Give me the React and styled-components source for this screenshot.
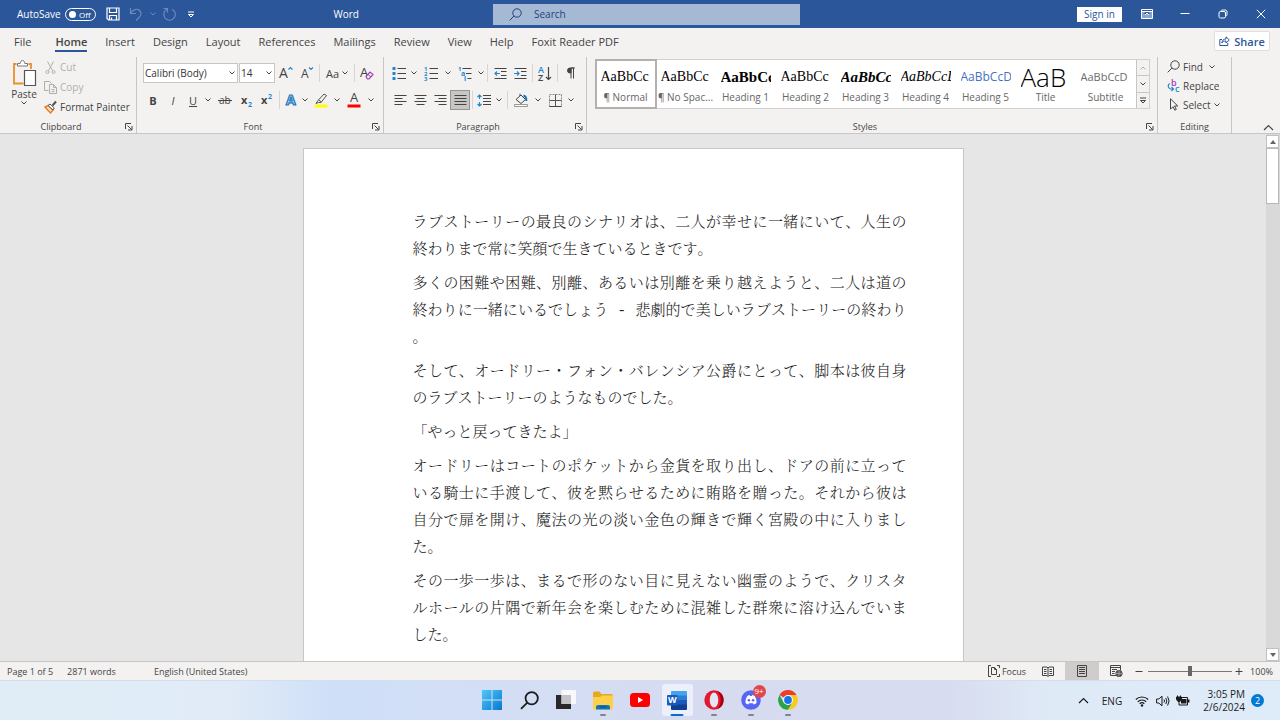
import { useState } from 'react';
import styled, { createGlobalStyle, css } from 'styled-components';

const GlobalStyle = createGlobalStyle`
	* {
		box-sizing: border-box;
	}

	body {
		margin: 0;
		font-family: "Open Sans", "Noto Sans", sans-serif;
		font-size: 11px;
		color: #444;
		overflow: hidden;
	}

	button, input, select {
		font: inherit;
		color: inherit;
		margin: 0;
	}
`;

const Window = styled.div`
	display: flex;
	flex-direction: column;
	width: 100%;
	height: 100vh;
	background: #e6e6e6;
`;

const PlainButton = styled.button`
	display: flex;
	align-items: center;
	justify-content: center;
	padding: 0;
	border: 0;
	background: none;
	white-space: nowrap;
`;

/* Title bar */

const TitleBar = styled.header`
	display: grid;
	grid-template-columns: 493fr 307fr 480fr;
	align-items: center;
	height: 28px;
	background: #2b579a;
	color: #fff;
	font-size: 10px;
`;

const QuickAccess = styled.div`
	display: flex;
	align-items: center;
	padding-left: 17px;
`;

const AutoSave = styled.label`
	display: flex;
	align-items: center;
	gap: 4px;
	margin-right: 7px;
`;

const Toggle = styled.button`
	display: flex;
	align-items: center;
	justify-content: space-between;
	width: 31px;
	height: 13px;
	padding: 0 4px 0 3px;
	border: 1px solid #fff;
	border-radius: 7px;
	background: none;
	font-size: 8px;
	line-height: 11px;

	&::before {
		content: "";
		width: 7px;
		height: 7px;
		border-radius: 50%;
		background: #fff;
	}
`;

const TitleButton = styled(PlainButton)`
	width: ${p => p.$w || 20}px;
	height: 28px;
	opacity: ${p => (p.disabled ? 0.3 : 1)};
`;

const DocTitle = styled.span`
	margin-left: auto;
	padding-right: 134px;
`;

const SearchBox = styled.label`
	display: flex;
	align-items: center;
	gap: 12px;
	height: 21px;
	padding-left: 16px;
	background: #a5b9d5;
	color: #1f427d;
`;

const SearchInput = styled.input`
	flex: 1;
	min-width: 0;
	padding: 0;
	border: 0;
	outline: 0;
	background: none;

	&::placeholder {
		color: #1f427d;
		opacity: 1;
	}
`;

const WindowControls = styled.div`
	display: flex;
	align-items: center;
	justify-content: flex-end;
`;

const SignIn = styled(PlainButton)`
	width: 45px;
	height: 15px;
	margin-right: 6px;
	background: #fff;
	color: #2b579a;
`;

/* Tabs */

const TabBar = styled.nav`
	display: flex;
	align-items: center;
	height: 28px;
	padding: 0 10px 0 5px;
	background: #f3f2f1;
`;

const Tab = styled(PlainButton)`
	position: relative;
	height: 28px;
	padding: 0 9px 2px;
	font-weight: ${p => (p.$active ? 600 : 400)};

	&:first-child {
		margin-right: 6px;
	}

	${p => p.$active && css`
		&::after {
			content: "";
			position: absolute;
			left: 9px;
			right: 9px;
			bottom: 4px;
			height: 2px;
			background: #2b579a;
		}
	`}
`;

const ShareButton = styled(PlainButton)`
	gap: 4px;
	width: 56px;
	height: 20px;
	margin: 0 0 2px auto;
	border: 1px solid #e1dfdd;
	border-radius: 2px;
	background: #fff;
	color: #2b579a;
	font-weight: 600;
`;

/* Ribbon */

const Ribbon = styled.section`
	display: flex;
	height: 78px;
	padding-top: 1px;
	border-bottom: 1px solid #c8c6c4;
	background: #f3f2f1;
`;

const GroupBox = styled.div`
	display: flex;
	flex-direction: column;
	flex: ${p => (p.$grow ? '1 1 0' : '0 0 auto')};
	width: ${p => (p.$w ? `${p.$w}px` : 'auto')};
	min-width: 0;
	border-right: 1px solid #c8c6c4;
`;

const GroupBody = styled.div`
	display: flex;
	flex: 1;
	min-height: 0;
	flex-direction: ${p => (p.$column ? 'column' : 'row')};
	gap: ${p => p.$gap || 0}px;
	padding: ${p => p.$pad || '6px 6px 0'};
`;

const GroupFooter = styled.div`
	display: flex;
	align-items: center;
	height: 13px;
	font-size: 9px;
	text-align: center;
`;

const GroupLabel = styled.span`
	flex: 1;
`;

const Launcher = styled(PlainButton)`
	width: 14px;
	height: 13px;
`;

const ToolRow = styled.div`
	display: flex;
	align-items: center;
	height: 20px;
`;

const Tool = styled(PlainButton)`
	width: ${p => p.$w || 20}px;
	height: 20px;
	font-size: 11px;

	${p => p.$active && css`
		border: 1px solid #979593;
		background: #c8c6c4;
	`}
`;

const Divider = styled.span`
	width: 1px;
	height: 18px;
	margin: 0 2px;
	background: #d8d6d4;
`;

const Combo = styled.span`
	display: flex;
	align-items: center;
	width: ${p => p.$w}px;
	height: 20px;
	margin-right: ${p => p.$after || 0}px;
	padding-right: 2px;
	border: 1px solid #c8c6c4;
	background: #fff;
`;

const ComboSelect = styled.select`
	flex: 1;
	min-width: 0;
	height: 18px;
	padding: 0 0 0 1px;
	border: 0;
	outline: 0;
	appearance: none;
	background: none;
	color: #333;
	font-size: 10px;
`;

const PasteButton = styled(PlainButton)`
	flex-direction: column;
	justify-content: flex-start;
	width: 36px;
	padding: 2px 0 0;
	font-size: 10px;
`;

const LabelledList = styled.div`
	display: flex;
	flex-direction: column;
`;

const LabelledTool = styled(PlainButton)`
	justify-content: flex-start;
	gap: 3px;
	height: ${p => p.$h || 20}px;
	font-size: 10px;
	color: ${p => (p.disabled ? '#b1afad' : '#444')};
`;

const Gallery = styled.div`
	display: flex;
	height: 50px;
	margin: 0 auto;
	border: 1px solid #d2d0ce;
	background: #fff;
`;

const StyleItem = styled(PlainButton)`
	flex-direction: column;
	width: 60px;
	height: 48px;
	padding-top: 2px;
	outline: ${p => (p.$active ? '2px solid #b3b0ad' : '0')};
	outline-offset: -1px;
`;

const StylePreview = styled.span`
	width: 50px;
	height: 24px;
	overflow: hidden;
	text-align: left;
	line-height: 24px;
	color: ${p => p.$color || '#000'};
	font-family: ${p => (p.$sans ? '"Open Sans", sans-serif' : '"Liberation Serif", serif')};
	font-size: ${p => p.$size || 14}px;
	font-weight: ${p => p.$weight || 400};
	font-style: ${p => (p.$italic ? 'italic' : 'normal')};
`;

const StyleName = styled.span`
	height: 16px;
	line-height: 16px;
	font-size: 10px;
	color: #666;
`;

const GalleryNav = styled.div`
	display: flex;
	flex-direction: column;
	width: 13px;
`;

const GalleryNavButton = styled(PlainButton)`
	flex: 1;
	border-left: 1px solid #c8c6c4;
	background: #f3f2f1;

	& + & {
		border-top: 1px solid #c8c6c4;
	}
`;

const RibbonEnd = styled.div`
	display: flex;
	align-items: flex-end;
	justify-content: flex-end;
	width: 48px;
	padding: 0 6px 2px 0;
`;

/* Document */

const Workspace = styled.main`
	display: flex;
	flex: 1;
	min-height: 0;
`;

const Canvas = styled.div`
	display: flex;
	justify-content: center;
	flex: 1;
	min-width: 0;
	overflow: hidden;
	padding-top: 14px;
`;

const Page = styled.article`
	width: 661px;
	min-height: 855px;
	padding: 61px 0 0 109px;
	border: 1px solid #c6c6c6;
	background: #fff;
	color: #222;
	font-family: "Liberation Mono", "Noto Serif CJK JP", "Noto Sans CJK JP", monospace;
	font-size: 15px;
	font-weight: 300;
	line-height: 27px;
	font-kerning: none;
	text-spacing-trim: space-all;
`;

const Paragraph = styled.p`
	width: 494px;
	margin: 0 0 7px;
	text-align: justify;
	line-break: anywhere;
`;

const ScrollBar = styled.div`
	display: flex;
	flex-direction: column;
	width: 14px;
	padding: 1px 1px 0 0;
	background: #d9d9d9;
`;

const ScrollButton = styled(PlainButton)`
	height: 13px;
	border: 1px solid #c1c1c1;
	background: #fff;
`;

const ScrollThumb = styled.div`
	height: 56px;
	margin-bottom: auto;
	border: 1px solid #b8b8b8;
	background: #fff;
`;

/* Status bar */

const StatusBar = styled.footer`
	display: flex;
	align-items: center;
	height: 19px;
	padding: 0 7px;
	border-top: 1px solid #c8c6c4;
	background: #f3f2f1;
	font-size: 9px;
`;

const StatusText = styled.span`
	margin-right: ${p => p.$after || 0}px;
	white-space: nowrap;
`;

const StatusTools = styled.div`
	display: flex;
	align-items: center;
	margin-left: auto;
`;

const ViewButton = styled(PlainButton)`
	gap: 2px;
	width: ${p => p.$w || 34}px;
	height: 18px;
	background: ${p => (p.$active ? '#cfcdcb' : 'none')};
`;

const ZoomSlider = styled.input`
	width: 84px;
	height: 12px;
	margin: 0 3px;
	appearance: none;
	background: linear-gradient(#777, #777) center / 100% 1px no-repeat;

	&::-webkit-slider-thumb {
		appearance: none;
		width: 4px;
		height: 10px;
		background: #666;
	}
`;

const ZoomValue = styled.span`
	width: 30px;
	text-align: right;
`;

/* Taskbar */

const Taskbar = styled.footer`
	display: grid;
	grid-template-columns: 1fr auto 1fr;
	align-items: center;
	height: 40px;
	border-top: 1px solid #d3dfea;
	background: linear-gradient(90deg, #e0edf6 0%, #e0ebf7 18%, #cfdff8 26%, #d3def5 40%, #d6dbf0 55%, #d8dcf0 74%, #dfeaf7 82%, #deebf8 100%);
	color: #1b1b1b;
`;

const TaskApps = styled.div`
	display: flex;
	grid-column: 2;
`;

const TaskApp = styled(PlainButton)`
	position: relative;
	width: ${p => (p.$active ? 31 : 37)}px;
	height: 32px;
	margin: 0 ${p => (p.$active ? 3 : 0)}px 1px;
	border-radius: 3px;
	background: ${p => (p.$active ? '#edf0fa' : 'none')};

	${p => p.$running && css`
		&::after {
			content: "";
			position: absolute;
			left: 50%;
			bottom: 0;
			width: ${p.$active ? 13 : 6}px;
			height: 2px;
			border-radius: 1px;
			background: ${p.$active ? '#0a6fc9' : '#80858f'};
			transform: translateX(-50%);
		}
	`}
`;

const CountBadge = styled.span`
	position: absolute;
	top: 1px;
	right: 4px;
	width: 13px;
	height: 13px;
	border-radius: 50%;
	background: #e0474c;
	color: #fff;
	font-size: 8px;
	line-height: 12px;
`;

const Tray = styled.div`
	display: flex;
	align-items: center;
	justify-content: flex-end;
	padding-right: 16px;
`;

const TrayButton = styled(PlainButton)`
	width: ${p => p.$w || 20}px;
	height: 32px;
	font-size: 10px;
`;

const Clock = styled.time`
	width: 52px;
	font-size: 10px;
	line-height: 13px;
	text-align: right;
	white-space: nowrap;
`;

const Notifications = styled(PlainButton)`
	width: 13px;
	height: 13px;
	margin-left: 6px;
	border-radius: 50%;
	background: #0078d4;
	color: #fff;
	font-size: 9px;
`;

/* Icons */

const BLUE = '#1e88d0';

const Svg = ({ w = 16, h = w, children, ...rest }) => (
	<svg width={w} height={h} viewBox={`0 0 ${w} ${h}`} fill="none" stroke="currentColor" strokeWidth="1" overflow="visible" aria-hidden="true" {...rest}>
		{children}
	</svg>
);

const Glyph = ({ color = 'currentColor', size, children, ...rest }) => (
	<text fill={color} stroke="none" fontSize={size} {...rest}>{children}</text>
);

const Chevron = ({ up, big, color }) => {
	if (big) {
		return <Svg w={11} h={7} strokeWidth="1.2"><path d={up ? 'M1 6 5.500 1.500 10 6' : 'M1 1 5.500 5.500 10 1'} /></Svg>;
	}
	return <Svg w={6} h={4} stroke={color || 'currentColor'}><path d={up ? 'M.5 3.500 3 1 5.500 3.500' : 'M.5.5 3 3 5.500.5'} /></Svg>;
};

const SaveIcon = () => (
	<Svg w={14} strokeWidth="1.2">
		<path d="M1 1h12v12H2.500L1 11.500zM3.500 1v4.500h7V1M3.500 13V8.500h7V13M5.500 13v-2.500" />
	</Svg>
);

const UndoIcon = () => (
	<Svg w={14} strokeWidth="1.2"><path d="M1.500 1v5.500H7M1.500 6.500C4 2.500 8 1 10.500 3.500s2 5-1 7.500L7 13.500" /></Svg>
);

const RedoIcon = () => (
	<Svg w={14} strokeWidth="1.2"><path d="M1.500 1.500h4v4M5.500 2A5.800 5.800 0 1 0 10 2.200" /></Svg>
);

const CustomizeIcon = () => <Svg w={8} h={7}><path d="M1 1h6M1.500 3.500h5L4 6z" /></Svg>;

const MagnifierIcon = ({ size = 13, weight = 1 }) => (
	<svg width={size} height={size} viewBox="0 0 13 13" fill="none" stroke="currentColor" strokeWidth={weight} aria-hidden="true">
		<circle cx="8" cy="5" r="4.200" /><path d="M5 8 .7 12.300" />
	</svg>
);

const RibbonModeIcon = () => (
	<Svg w={12} h={10}>
		<path d="M.5.5h11v9H.5zM.5 2.500h11" />
		<path fill="#fff" stroke="none" d="M1 2h4L3 5h2v4H1zM7 2h4v7H7V5h2z" opacity=".45" />
		<path d="M6 9V4M4 6l2-2 2 2" />
	</Svg>
);

const MinimizeIcon = () => <Svg w={10}><path d="M.5 4.500h9" /></Svg>;
const RestoreIcon = () => <Svg w={10}><rect x="1" y="2.500" width="6.500" height="6.500" rx="1.500" /><path d="M3 2.500C3 1.500 3.500 1 4.500 1H7c1.500 0 2 .5 2 2v2.500C9 6.500 8.500 7 7.500 7" /></Svg>;
const CloseIcon = () => <Svg w={10}><path d="m.8.8 8.400 8.400m0-8.400L.8 9.200" /></Svg>;
const ShareIcon = () => <Svg w={11} h={10}><path d="M3 3.500H.8v6h8V7M2.800 7C3 4.500 4.500 3 7 3V.8L10.300 4 7 7V5C5 5 3.800 5.500 2.800 7z" /></Svg>;

const PasteIcon = () => (
	<Svg w={26} h={28}>
		<path d="M5.500 5H3v19.500h9.500M17.500 5H20v5" stroke="#e8912d" strokeWidth="1.800" />
		<path d="M6.500 7V4.500h2.700C9.500 2.500 10.300 1.500 11.500 1.500s2 1 2.300 3h2.700V7z" fill="#fff" stroke="#777" />
		<path d="M13.500 11.500h11v15h-11z" fill="#fff" stroke="#555" strokeWidth="1.200" />
	</Svg>
);

const CutIcon = () => <Svg w={13} h={13}><path d="m3.500.5 5 9M9.500.5l-5 9" /><circle cx="3.500" cy="11" r="1.500" /><circle cx="9.500" cy="11" r="1.500" /></Svg>;
const CopyIcon = () => <Svg w={13} h={13}><path d="M4.500 9.500h-4v-9h5l2 2M5.500 3.500h4l3 3v6h-7zM9.500 3.500v3h3M7.500 8.500h3m-3 2h3" /></Svg>;
const PainterIcon = () => (
	<Svg w={13} h={13}>
		<path d="M1 6 6.500 12l2.500-3L4 4.500z" fill="#fbe0c3" stroke="#e8791f" strokeWidth="1.400" />
		<path d="m4 4.500 2-1.500L10.200 7 9 9z" fill="#fff" stroke="#555" />
		<path d="m8.500 4.500 3.500-4" stroke="#555" strokeWidth="2" />
	</Svg>
);

const LauncherIcon = () => <Svg w={8}><path d="M.5 6V.5H6M2.500 2.500 6.500 6.500M7 3v4H3" /></Svg>;

const GrowFontIcon = ({ shrink }) => (
	<Svg w={14} h={14}>
		<Glyph x={shrink ? 1 : 0} y="12" size={shrink ? 12 : 14}>A</Glyph>
		<path d={shrink ? 'm9 1.500 2 2 2-2' : 'm9.500 3.500 2-2 2 2'} stroke={BLUE} strokeWidth="1.200" />
	</Svg>
);

const ClearFormatIcon = () => (
	<Svg w={14} h={14}>
		<Glyph x="0" y="11" size="13">A</Glyph>
		<path d="m6 10.500 4-4.500 3 2.500-4 4.500H7.500z" fill="#f3f2f1" stroke="#a33fb5" strokeWidth="1.200" /><path d="m8 8.500 3 2.500" stroke="#a33fb5" />
	</Svg>
);

const StrikeIcon = () => (
	<Svg w={14} h={14}><Glyph x="1" y="11" size="10">ab</Glyph><path d="M0 7.500h14" /></Svg>
);

const ScriptIcon = ({ sup }) => (
	<Svg w={14} h={16}>
		<Glyph x="1" y="12" size="11" fontWeight="700">x</Glyph>
		<Glyph x="8" y={sup ? 7 : 15} color={BLUE} size="7" fontWeight="700">2</Glyph>
	</Svg>
);

const TextEffectIcon = () => (
	<Svg w={14} h={14}>
		<text x="2" y="12" fontSize="14" fontWeight="700" fill="#bfe0f7" stroke="#1b75bb" strokeWidth="1.200">A</text>
	</Svg>
);

const HighlightIcon = () => (
	<Svg w={14} h={16}>
		<path d="M4 8.500 10 2l2.500 1.500-5.500 7H4.500L2 11.500z" stroke="#555" /><path d="m4.500 8 3 2" stroke="#555" />
		<path d="M.5 12.500h13v3H.5z" fill="#ff0" stroke="none" />
	</Svg>
);

const FontColorIcon = () => (
	<Svg w={14} h={16}><Glyph x="3" y="10" size="13">A</Glyph><path d="M.5 12.500h13v3H.5z" fill="#f00" stroke="none" /></Svg>
);

const LIST_LINES = 'M5.500 2.500H14M5.500 7.500H14M5.500 12.500H14';
const BulletsIcon = () => <Svg w={14} h={15}><path d={LIST_LINES} /><path d="M.5 1h3v3h-3zM.5 6h3v3h-3zM.5 11h3v3h-3z" fill={BLUE} stroke="none" /></Svg>;
const NumberingIcon = () => (
	<Svg w={14} h={15}>
		<path d={LIST_LINES} />
		{[1, 2, 3].map(n => <Glyph key={n} x="0" y={n * 5} size="6" fontWeight="700" color={BLUE}>{n}</Glyph>)}
	</Svg>
);
const MultilevelIcon = () => (
	<Svg w={14} h={15}>
		<path d="M4.500 2.500h9M8 7.500h5.500M9.500 12.500h4" />
		<Glyph x="0" y="5" size="6" fontWeight="700" color={BLUE}>1</Glyph>
		<Glyph x="3" y="10" size="7" fontWeight="700" color={BLUE}>a</Glyph>
		<Glyph x="6" y="15" size="7" fontWeight="700" color={BLUE}>i</Glyph>
	</Svg>
);
const IndentIcon = ({ out }) => (
	<Svg w={13} h={13}>
		<path d="M.5 1.500h12M7 4.500h5.500M7 8.500h5.500M.5 11.500h12" />
		<path d={out ? 'M6 6.500H1M3 4.500l-2 2 2 2' : 'M0 6.500h5M3 4.500l2 2-2 2'} stroke={BLUE} strokeWidth="1.200" />
	</Svg>
);
const SortIcon = () => (
	<Svg w={14} h={15}>
		<Glyph x="0" y="7" size="9" fontWeight="600" color={BLUE}>A</Glyph>
		<Glyph x="0" y="15" size="9" fontWeight="600">Z</Glyph>
		<path d="M10.500 1v12.500M8 11l2.500 2.500L13 11" strokeWidth="1.200" />
	</Svg>
);
const PilcrowIcon = () => <Svg w={9} h={12}><path d="M8.500 1H4a2.500 2.500 0 0 0 0 5h1V1z" fill="currentColor" /><path d="M5 1v10.500M7.500 1v10.500" /></Svg>;

const ALIGN_PATHS = {
	left: 'M.5 1.500h12M.5 4.500h8M.5 7.500h12M.5 10.500h8',
	center: 'M.5 1.500h12M2.500 4.500h8M.5 7.500h12M2.500 10.500h8',
	right: 'M.5 1.500h12M4.500 4.500h8M.5 7.500h12M4.500 10.500h8',
	justify: 'M.5 1.500h12M.5 4.500h12M.5 7.500h12M.5 10.500h12',
};
const AlignIcon = ({ kind }) => <Svg w={13} h={12}><path d={ALIGN_PATHS[kind]} /></Svg>;

const SpacingIcon = () => (
	<Svg w={14} h={13}>
		<path d="M6 1.500h8M6 4.500h8M6 7.500h8M6 10.500h8" />
		<path d="M2.500 1v4M.5 3l2-2 2 2M2.500 8v4M.5 10l2 2 2-2" stroke={BLUE} strokeWidth="1.200" />
	</Svg>
);
const ShadingIcon = () => (
	<Svg w={14} h={14}>
		<path d="M2 6.500 7 2l4.500 4.500L7 10.500zM6 3V.8" /><path d="M9.500 2.500c2.500.5 3 2.500 2.800 5.500" stroke="#1b75bb" strokeWidth="2" />
		<path d="M.5 11.500h13v2H.5z" fill="#fff" stroke="#999" />
	</Svg>
);
const BordersIcon = () => <Svg w={13} h={13}><path d="M.5.5h12v12H.5z" stroke="#888" strokeDasharray="2 1" /><path d="M6.500.5v12M.5 6.500h12" stroke="#555" /><path d="M.5 12.500h12" /></Svg>;

const ReplaceIcon = () => (
	<Svg w={13} h={14}>
		<Glyph x="4" y="7" color="#a33fb5" size="9" fontWeight="600">b</Glyph>
		<Glyph x="8" y="13" color={BLUE} size="9" fontWeight="600">c</Glyph>
		<path d="M3 4.500c-2.500 1-2.500 4.500.5 5.500h3M4.500 8l2 2-2 2" stroke={BLUE} strokeWidth="1.200" />
	</Svg>
);
const SelectIcon = () => <Svg w={13} h={13}><path d="M3.500.8v10.400l2.500-2.500 1.800 3.500 1.500-.8L7.600 8h3.200z" /></Svg>;

const TriangleIcon = ({ up }) => <Svg w={6} h={4}><path d={up ? 'M0 4 3 0l3 4z' : 'M0 0h6L3 4z'} fill="#666" stroke="none" /></Svg>;

const FocusIcon = () => <Svg w={12} h={12}><path d="M3 .5H.5v11H3M9 .5h2.500V3M9 11.500h2.500V9M3.500 2.500h3l2 2v5h-5zM6.500 2.500v2h2" /></Svg>;
const ReadIcon = () => <Svg w={12} h={11}><path d="M.5 1h4.500l1 1 1-1h4.500v8.500H7l-1 1-1-1H.5zM6 2v8.500M2 3.500h2.500M2 5.500h2.500M2 7.500h2.500M7.500 3.500H10M7.500 5.500H10M7.500 7.500H10" /></Svg>;
const PrintIcon = () => <Svg w={10} h={12}><path d="M.5.5h9v11h-9zM2 2.500h6M2 4.500h6M2 6.500h6M2 8.500h6" /></Svg>;
const WebIcon = () => (
	<Svg w={13} h={12}>
		<path d="M6 10.500H.5V.5h10V5M.5 2.500h10M2 4.500h5M2 6.500h3M2 8.500h2.500" />
		<circle cx="9" cy="8.500" r="3.200" fill="#555" stroke="#555" /><path d="M6 8.500h6M9 5.500v6" stroke="#ccc" strokeWidth=".6" />
	</Svg>
);

const WindowsIcon = () => (
	<Svg w={20} stroke="none">
		<defs><linearGradient id="win" x1="0" y1="0" x2="1" y2="1"><stop stopColor="#4fc8f4" /><stop offset="1" stopColor="#0878d2" /></linearGradient></defs>
		<path d="M0 0h9.500v9.500H0zM10.500 0H20v9.500h-9.500zM0 10.500h9.500V20H0zM10.500 10.500H20V20h-9.500z" fill="url(#win)" />
	</Svg>
);
const TaskViewIcon = () => (
	<Svg w={20} stroke="none">
		<path d="M0 5h15v14H0z" fill="#282828" /><path d="M5.500 0H20v14H5.500z" fill="#fafafa" opacity=".92" /><path d="M5.500 5H15v9H5.500z" fill="#c4c4c6" />
	</Svg>
);
const ExplorerIcon = () => (
	<Svg w={20} h={19} stroke="none">
		<path d="M0 2Q0 .5 1.500.5h5l2 2.500H18q2 0 2 2v5H0z" fill="#e6a821" />
		<path d="M0 6h7l2-1.500h11V17q0 1.500-1.500 1.500h-17Q0 18.500 0 17z" fill="#fdd04b" />
		<path d="M3 18.500V16q0-2 2-2h10q2 0 2 2v2.500z" fill="#0f75bd" /><path d="M6.500 16h7" stroke="#064f88" />
	</Svg>
);
const YoutubeIcon = () => <Svg w={20} h={14} stroke="none"><rect width="20" height="14" rx="3.500" fill="#f00" /><path d="m8 4 5.200 3L8 10z" fill="#fff" /></Svg>;
const WordIcon = () => (
	<Svg w={20} h={20} stroke="none">
		<path d="M5 1h14q1 0 1 1v4H4V2q0-1 1-1z" fill="#41a5ee" /><path d="M4 5.500h16V10H4z" fill="#2b7cd3" />
		<path d="M4 10h16v5H4z" fill="#185abd" /><path d="M4 14.500h16V19q0 1-1 1H5q-1 0-1-1z" fill="#103f91" />
		<rect y="5" width="10.500" height="10.500" rx="1" fill="#185abd" />
		<Glyph x="1" y="13" color="#fff" size="9" fontWeight="700">W</Glyph>
	</Svg>
);
const OperaIcon = () => (
	<Svg w={20} h={20} stroke="none">
		<circle cx="10" cy="10" r="9.700" fill="#e3192d" /><path d="M13 .8A9.700 9.700 0 0 1 13 19.200c5-5 5-13 0-18.400z" fill="#a70014" />
		<ellipse cx="10" cy="10" rx="4.300" ry="7.600" fill="#e4e6f5" />
	</Svg>
);
const DiscordIcon = () => (
	<Svg w={20} h={20} stroke="none">
		<circle cx="10" cy="10" r="9.800" fill="#5865f2" />
		<path d="M6.500 5.800 8.600 5l.5 1h1.800l.5-1 2.100.8c1.500 2.200 2.200 4.600 2 7.200-.9.800-1.900 1.200-2.700 1.500l-.8-1.300h-4l-.8 1.300c-.9-.3-1.800-.7-2.700-1.500-.2-2.600.5-5 2-7.200z" fill="#fff" />
		<circle cx="7.900" cy="10.300" r="1.300" fill="#5865f2" /><circle cx="12.100" cy="10.300" r="1.300" fill="#5865f2" />
	</Svg>
);
const ChromeIcon = () => (
	<Svg w={20} h={20} stroke="none">
		<path d="M10 10 1.500 5A9.800 9.800 0 0 1 18.500 5H10z" fill="#e8402f" />
		<path d="M10 5h8.500A9.800 9.800 0 0 1 10 19.800L14.300 12.500z" fill="#fcc91f" />
		<path d="M1.500 5 5.700 12.500 10 15l4.300-2.500L10 19.800A9.800 9.800 0 0 1 1.500 5z" fill="#2ba24c" />
		<circle cx="10" cy="10" r="4.900" fill="#fff" /><circle cx="10" cy="10" r="3.900" fill="#1a73e8" />
	</Svg>
);

const WifiIcon = () => <Svg w={14} h={12}><path d="M.8 4.500a9 9 0 0 1 12.400 0M2.800 6.700a6 6 0 0 1 8.400 0M4.700 8.800a3.300 3.300 0 0 1 4.600 0" strokeWidth="1.200" /><circle cx="7" cy="10.500" r="1.200" fill="currentColor" stroke="none" /></Svg>;
const VolumeIcon = () => <Svg w={14} h={12}><path d="M.6 4h2.200L6 1.200v9.600L2.800 8H.6zM8 4.500q1 1.500 0 3M9.800 3q2 3 0 6M11.600 1.500q3 4.500 0 9" /></Svg>;
const BatteryIcon = () => (
	<Svg w={14} h={12}>
		<path d="M4 2.500h7.500v7.500H3V7" /><path d="M12 4.500h1.500v3H12z" fill="currentColor" stroke="none" /><path d="M5 4h5.500v4.500H5z" fill="currentColor" stroke="none" />
		<path d="M.5 2h5v2.500L4 6.500H2L.5 4.500zM1.500.5V2M4.500.5V2" fill="currentColor" />
	</Svg>
);

/* Content */

const TABS = ['File', 'Home', 'Insert', 'Design', 'Layout', 'References', 'Mailings', 'Review', 'View', 'Help', 'Foxit Reader PDF'];

const STYLES = [
	{ name: '¶ Normal', text: 'AaBbCc' },
	{ name: '¶ No Spac...', text: 'AaBbCc' },
	{ name: 'Heading 1', text: 'AaBbCc', size: 15, weight: 700 },
	{ name: 'Heading 2', text: 'AaBbCc' },
	{ name: 'Heading 3', text: 'AaBbCc', size: 15, weight: 700, italic: true },
	{ name: 'Heading 4', text: 'AaBbCcD', italic: true },
	{ name: 'Heading 5', text: 'AaBbCcD', sans: true, size: 12, color: '#4472c4' },
	{ name: 'Title', text: 'AaB', sans: true, size: 26, weight: 300 },
	{ name: 'Subtitle', text: 'AaBbCcD', sans: true, size: 11, color: '#6b6b6b' },
];

const PARAGRAPHS = [
	'ラブストーリーの最良のシナリオは、二人が幸せに一緒にいて、人生の終わりまで常に笑顔で生きているときです。',
	'多くの困難や困難、別離、あるいは別離を乗り越えようと、二人は道の終わりに一緒にいるでしょう - 悲劇的で美しいラブストーリーの終わり。',
	'そして、オードリー・フォン・バレンシア公爵にとって、脚本は彼自身のラブストーリーのようなものでした。',
	'「やっと戻ってきたよ」',
	'オードリーはコートのポケットから金貨を取り出し、ドアの前に立っている騎士に手渡して、彼を黙らせるために賄賂を贈った。それから彼は自分で扉を開け、魔法の光の淡い金色の輝きで輝く宮殿の中に入りました。',
	'その一歩一歩は、まるで形のない目に見えない幽霊のようで、クリスタルホールの片隅で新年会を楽しむために混雑した群衆に溶け込んでいました。',
];

const Group = ({ label, launcher = true, width, grow, children }) => (
	<GroupBox $w={width} $grow={grow}>
		{children}
		<GroupFooter>
			<GroupLabel>{label}</GroupLabel>
			{launcher && <Launcher aria-label={`${label} settings`}><LauncherIcon /></Launcher>}
		</GroupFooter>
	</GroupBox>
);

const Drop = ({ w = 12, label }) => <Tool $w={w} aria-label={label}><Chevron /></Tool>;

const App = () => {
	const [activeTab, setActiveTab] = useState('Home');
	const [activeStyle, setActiveStyle] = useState('¶ Normal');
	const [align, setAlign] = useState('justify');
	const [zoom, setZoom] = useState(100);

	return (
		<Window>
			<GlobalStyle />
			<TitleBar>
				<QuickAccess>
					<AutoSave>AutoSave<Toggle role="switch" aria-checked="false">Off</Toggle></AutoSave>
					<TitleButton aria-label="Save"><SaveIcon /></TitleButton>
					<TitleButton $w={26} disabled aria-label="Undo"><UndoIcon /></TitleButton>
					<TitleButton $w={8} disabled aria-label="Undo history"><Chevron /></TitleButton>
					<TitleButton $w={24} disabled aria-label="Redo"><RedoIcon /></TitleButton>
					<TitleButton aria-label="Customize toolbar"><CustomizeIcon /></TitleButton>
					<DocTitle>Word</DocTitle>
				</QuickAccess>
				<SearchBox>
					<MagnifierIcon />
					<SearchInput placeholder="Search" aria-label="Search" />
				</SearchBox>
				<WindowControls>
					<SignIn>Sign in</SignIn>
					<TitleButton $w={38} aria-label="Ribbon display options"><RibbonModeIcon /></TitleButton>
					<TitleButton $w={38} aria-label="Minimize"><MinimizeIcon /></TitleButton>
					<TitleButton $w={38} aria-label="Restore"><RestoreIcon /></TitleButton>
					<TitleButton $w={38} aria-label="Close"><CloseIcon /></TitleButton>
				</WindowControls>
			</TitleBar>

			<TabBar>
				{TABS.map(tab => (
					<Tab key={tab} $active={tab === activeTab} onClick={() => setActiveTab(tab)}>{tab}</Tab>
				))}
				<ShareButton><ShareIcon />Share</ShareButton>
			</TabBar>

			<Ribbon>
				<Group label="Clipboard" width={137}>
					<GroupBody $pad="0 6px" $gap={2}>
						<PasteButton><PasteIcon />Paste<Chevron /></PasteButton>
						<LabelledList>
							<LabelledTool disabled><CutIcon />Cut</LabelledTool>
							<LabelledTool disabled><CopyIcon />Copy</LabelledTool>
							<LabelledTool><PainterIcon />Format Painter</LabelledTool>
						</LabelledList>
					</GroupBody>
				</Group>

				<Group label="Font" width={247}>
					<GroupBody $column $gap={7}>
						<ToolRow>
							<Combo $w={95} $after={1}>
								<ComboSelect aria-label="Font"><option>Calibri (Body)</option></ComboSelect><Chevron />
							</Combo>
							<Combo $w={36}>
								<ComboSelect aria-label="Font size"><option>14</option></ComboSelect><Chevron />
							</Combo>
							<Tool $w={22} aria-label="Grow font"><GrowFontIcon /></Tool>
							<Tool aria-label="Shrink font"><GrowFontIcon shrink /></Tool>
							<Divider />
							<Tool $w={30} aria-label="Change case">Aa&nbsp;<Chevron /></Tool>
							<Divider />
							<Tool aria-label="Clear formatting"><ClearFormatIcon /></Tool>
						</ToolRow>
						<ToolRow>
							<Tool><b>B</b></Tool>
							<Tool><i>I</i></Tool>
							<Tool><u>U</u></Tool>
							<Drop w={10} label="Underline style" />
							<Tool $w={24} aria-label="Strikethrough"><StrikeIcon /></Tool>
							<Tool aria-label="Subscript"><ScriptIcon /></Tool>
							<Tool aria-label="Superscript"><ScriptIcon sup /></Tool>
							<Divider />
							<Tool $w={18} aria-label="Text effects"><TextEffectIcon /></Tool>
							<Drop w={10} label="Text effect options" />
							<Tool $w={22} aria-label="Highlight"><HighlightIcon /></Tool>
							<Drop w={10} label="Highlight color" />
							<Tool $w={24} aria-label="Font color"><FontColorIcon /></Tool>
							<Drop w={10} label="Font color options" />
						</ToolRow>
					</GroupBody>
				</Group>

				<Group label="Paragraph" width={203}>
					<GroupBody $column $gap={7}>
						<ToolRow>
							<Tool $w={18} aria-label="Bullets"><BulletsIcon /></Tool>
							<Drop label="Bullet library" />
							<Tool $w={22} aria-label="Numbering"><NumberingIcon /></Tool>
							<Drop label="Numbering library" />
							<Tool $w={22} aria-label="Multilevel list"><MultilevelIcon /></Tool>
							<Drop w={10} label="List library" />
							<Divider />
							<Tool aria-label="Decrease indent"><IndentIcon out /></Tool>
							<Tool aria-label="Increase indent"><IndentIcon /></Tool>
							<Divider />
							<Tool aria-label="Sort"><SortIcon /></Tool>
							<Divider />
							<Tool aria-label="Show marks"><PilcrowIcon /></Tool>
						</ToolRow>
						<ToolRow>
							{Object.keys(ALIGN_PATHS).map(kind => (
								<Tool key={kind} $active={kind === align} onClick={() => setAlign(kind)} aria-label={`Align ${kind}`}>
									<AlignIcon kind={kind} />
								</Tool>
							))}
							<Divider />
							<Tool $w={18} aria-label="Line spacing"><SpacingIcon /></Tool>
							<Drop label="Line spacing options" />
							<Divider />
							<Tool $w={22} aria-label="Shading"><ShadingIcon /></Tool>
							<Drop label="Shading color" />
							<Tool $w={22} aria-label="Borders"><BordersIcon /></Tool>
							<Drop w={10} label="Border options" />
						</ToolRow>
					</GroupBody>
				</Group>

				<Group label="Styles" grow>
					<GroupBody $pad="2px 0 0">
						<Gallery>
							{STYLES.map(s => (
								<StyleItem key={s.name} $active={s.name === activeStyle} onClick={() => setActiveStyle(s.name)}>
									<StylePreview $sans={s.sans} $size={s.size} $weight={s.weight} $italic={s.italic} $color={s.color}>{s.text}</StylePreview>
									<StyleName>{s.name}</StyleName>
								</StyleItem>
							))}
							<GalleryNav>
								<GalleryNavButton aria-label="Previous styles"><Chevron up color="#b1afad" /></GalleryNavButton>
								<GalleryNavButton aria-label="Next styles"><Chevron /></GalleryNavButton>
								<GalleryNavButton aria-label="More styles"><CustomizeIcon /></GalleryNavButton>
							</GalleryNav>
						</Gallery>
					</GroupBody>
				</Group>

				<Group label="Editing" launcher={false} width={74}>
					<GroupBody $pad="0 0 0 9px">
						<LabelledList>
							<LabelledTool $h={19}><MagnifierIcon />Find&nbsp; <Chevron /></LabelledTool>
							<LabelledTool $h={19}><ReplaceIcon />Replace</LabelledTool>
							<LabelledTool $h={19}><SelectIcon />Select<Chevron /></LabelledTool>
						</LabelledList>
					</GroupBody>
				</Group>
				<RibbonEnd>
					<PlainButton aria-label="Collapse ribbon"><Chevron up big /></PlainButton>
				</RibbonEnd>
			</Ribbon>

			<Workspace>
				<Canvas>
					<Page lang="ja">
						{PARAGRAPHS.map(text => <Paragraph key={text}>{text}</Paragraph>)}
					</Page>
				</Canvas>
				<ScrollBar>
					<ScrollButton aria-label="Scroll up"><TriangleIcon up /></ScrollButton>
					<ScrollThumb />
					<ScrollButton aria-label="Scroll down"><TriangleIcon /></ScrollButton>
				</ScrollBar>
			</Workspace>

			<StatusBar>
				<StatusText $after={14}>Page 1 of 5</StatusText>
				<StatusText $after={38}>2871 words</StatusText>
				<StatusText>English (United States)</StatusText>
				<StatusTools>
					<ViewButton $w={48}><FocusIcon />Focus</ViewButton>
					<ViewButton aria-label="Read mode"><ReadIcon /></ViewButton>
					<ViewButton $active aria-label="Print layout"><PrintIcon /></ViewButton>
					<ViewButton aria-label="Web layout"><WebIcon /></ViewButton>
					<ViewButton $w={12} aria-label="Zoom out"><Svg w={8}><path d="M.5 4.500h7" /></Svg></ViewButton>
					<ZoomSlider type="range" min="0" max="200" value={zoom} onChange={e => setZoom(Number(e.target.value))} aria-label="Zoom" />
					<ViewButton $w={8} aria-label="Zoom in"><Svg w={8}><path d="M.5 4.500h7M4 1v7" /></Svg></ViewButton>
					<ZoomValue>{zoom}%</ZoomValue>
				</StatusTools>
			</StatusBar>

			<Taskbar>
				<TaskApps>
					<TaskApp aria-label="Start"><WindowsIcon /></TaskApp>
					<TaskApp aria-label="Search"><MagnifierIcon size={19} weight={1.2} /></TaskApp>
					<TaskApp aria-label="Task view"><TaskViewIcon /></TaskApp>
					<TaskApp $running aria-label="File Explorer"><ExplorerIcon /></TaskApp>
					<TaskApp aria-label="YouTube"><YoutubeIcon /></TaskApp>
					<TaskApp $running $active aria-label="Word"><WordIcon /></TaskApp>
					<TaskApp $running aria-label="Opera"><OperaIcon /></TaskApp>
					<TaskApp $running aria-label="Discord"><DiscordIcon /><CountBadge>9+</CountBadge></TaskApp>
					<TaskApp $running aria-label="Chrome"><ChromeIcon /></TaskApp>
				</TaskApps>
				<Tray>
					<TrayButton aria-label="Hidden icons"><Chevron up big /></TrayButton>
					<TrayButton $w={38}>ENG</TrayButton>
					<TrayButton $w={22} aria-label="Network"><WifiIcon /></TrayButton>
					<TrayButton aria-label="Volume"><VolumeIcon /></TrayButton>
					<TrayButton aria-label="Battery"><BatteryIcon /></TrayButton>
					<Clock>3:05 PM<br />2/6/2024</Clock>
					<Notifications aria-label="Notifications">2</Notifications>
				</Tray>
			</Taskbar>
		</Window>
	);
};

export default App;
